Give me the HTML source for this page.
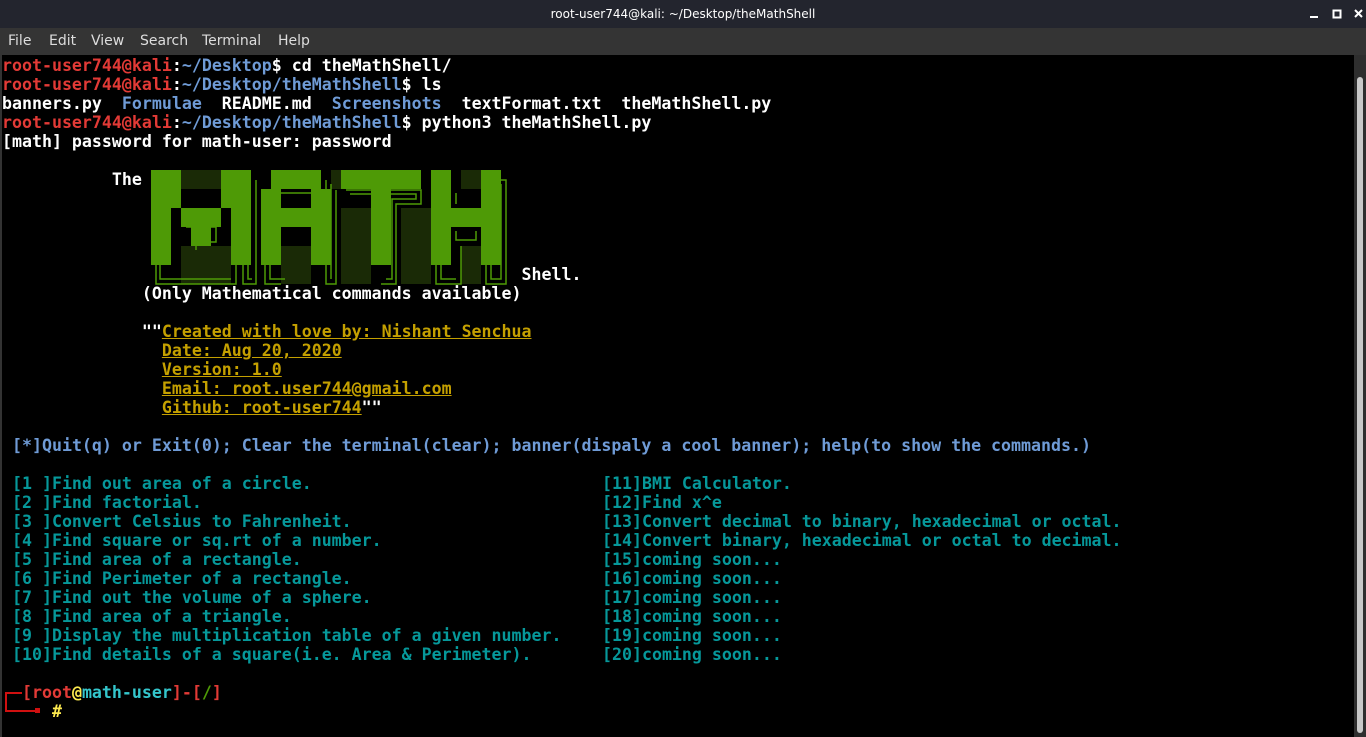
<!DOCTYPE html>
<html><head><meta charset="utf-8"><style>
html,body{margin:0;padding:0;background:#000;width:1366px;height:737px;overflow:hidden}
#title{position:absolute;left:0;top:0;width:1366px;height:28px;background:#23252e;color:#fff;font:12px "DejaVu Sans","Liberation Sans",sans-serif;text-align:center;line-height:28px}
#menu{position:absolute;left:0;top:28px;width:1366px;height:27px;background:#343434;color:#ddd;font:14px "DejaVu Sans","Liberation Sans",sans-serif;line-height:27px}
#menu span{position:absolute;top:0}
#term{position:absolute;left:0;top:55px;width:1354px;height:682px;background:#000}
#lb{position:absolute;left:0;top:55px;width:2px;height:682px;background:#333}
#sb{position:absolute;left:1354px;top:55px;width:12px;height:682px;background:#2e2e2e}
#th{position:absolute;left:1357px;top:77px;width:6px;height:656px;background:#c8c8c8;border-radius:3px}
pre{position:absolute;left:2px;top:56px;margin:0;font:bold 16.6px "DejaVu Sans Mono","Liberation Mono",monospace;line-height:19px;color:#fff;white-space:pre}
.r{color:#e23a36}.b{color:#6f9bd6}.y{color:#c4a000;text-decoration:underline}.c{color:#06989a}.g{color:#4e9a06}.cy{color:#34c6cc}.yl{color:#fce94f}
</style></head><body>
<div id="title">root-user744@kali: ~/Desktop/theMathShell</div>
<svg style="position:absolute;left:1300px;top:0" width="66" height="28">
<rect x="10" y="16" width="8" height="2" fill="#fff"/>
<rect x="33.5" y="10.5" width="7" height="7" fill="none" stroke="#fff" stroke-width="2"/>
<path d="M55 10 L62 17 M62 10 L55 17" stroke="#fff" stroke-width="2"/>
</svg>
<div id="menu"><span style="left:8px">File</span><span style="left:49px">Edit</span><span style="left:91px">View</span><span style="left:140px">Search</span><span style="left:202px">Terminal</span><span style="left:278px">Help</span></div>
<div id="term"></div><div id="lb"></div><div id="sb"></div><div id="th"></div>
<svg style="position:absolute;left:0;top:0" width="1354" height="737">
<g fill="#1a2a06">
<rect x="181" y="170" width="40" height="19"/><rect x="181" y="246" width="50" height="38"/>
<rect x="271" y="170" width="10" height="19"/><rect x="281" y="246" width="30" height="38"/>
<rect x="331" y="170" width="10" height="19"/><rect x="341" y="208" width="30" height="76"/>
<rect x="401" y="208" width="30" height="76"/><rect x="461" y="170" width="20" height="19"/><rect x="461" y="246" width="20" height="38"/>
</g>
<g fill="#4e9a06">
<rect x="151" y="170" width="30" height="19"/><rect x="221" y="170" width="30" height="19"/>
<rect x="151" y="189" width="20" height="76"/><rect x="231" y="189" width="20" height="76"/>
<rect x="171" y="189" width="10" height="19"/><rect x="221" y="189" width="10" height="19"/>
<rect x="181" y="208" width="40" height="19"/><rect x="191" y="227" width="20" height="19"/>
<rect x="271" y="170" width="50" height="19"/><rect x="261" y="189" width="20" height="76"/><rect x="311" y="189" width="20" height="76"/><rect x="281" y="208" width="30" height="19"/>
<rect x="341" y="170" width="80" height="19"/><rect x="371" y="189" width="20" height="76"/>
<rect x="431" y="170" width="20" height="95"/><rect x="481" y="170" width="20" height="95"/><rect x="451" y="208" width="30" height="19"/>
</g>
<g fill="none" stroke="#4e9a06" stroke-width="1.5">
<path d="M156 265V284H236V265M243 180V284H256V180M265 265V284H281M326 180V284H336V190M276 193H321V204M346 190H421V204H396V284H381M436 265V284H461V246M486 265V284H506V180H491"/>
<path d="M160 265V279H231M248 184V279H252M270 265V279H285M331 184V279M350 194H416V199H392V279H386M441 265V279H456M491 265V279H501V184"/>
<path d="M176 193V204M226 193V204M186 227H216V242H196V250M456 193V204M456 231V240H476V231"/>
</g>
</svg>
<pre><span class="r">root-user744@kali</span>:<span class="b">~/Desktop</span>$ cd theMathShell/
<span class="r">root-user744@kali</span>:<span class="b">~/Desktop/theMathShell</span>$ ls
banners.py  <span class="b">Formulae</span>  README.md  <span class="b">Screenshots</span>  textFormat.txt  theMathShell.py
<span class="r">root-user744@kali</span>:<span class="b">~/Desktop/theMathShell</span>$ python3 theMathShell.py
[math] password for math-user: password

           The




                                                    Shell.
              (Only Mathematical commands available)

              ""<span class="y">Created with love by: Nishant Senchua</span>
                <span class="y">Date: Aug 20, 2020</span>
                <span class="y">Version: 1.0</span>
                <span class="y">Email: root.user744@gmail.com</span>
                <span class="y">Github: root-user744</span>""

 <span class="b">[*]Quit(q) or Exit(0); Clear the terminal(clear); banner(dispaly a cool banner); help(to show the commands.)</span>

<span class="c"> [1 ]Find out area of a circle.
 [2 ]Find factorial.
 [3 ]Convert Celsius to Fahrenheit.
 [4 ]Find square or sq.rt of a number.
 [5 ]Find area of a rectangle.
 [6 ]Find Perimeter of a rectangle.
 [7 ]Find out the volume of a sphere.
 [8 ]Find area of a triangle.
 [9 ]Display the multiplication table of a given number.
 [10]Find details of a square(i.e. Area &amp; Perimeter).</span>

  <span class="r">[root</span><span class="yl">@</span><span class="cy">math-user</span><span class="r">]-[</span><span class="g">/</span><span class="r">]</span>
     <span class="yl">#</span></pre>
<pre class="c" style="left:602px;top:474px">[11]BMI Calculator.
[12]Find x^e
[13]Convert decimal to binary, hexadecimal or octal.
[14]Convert binary, hexadecimal or octal to decimal.
[15]coming soon...
[16]coming soon...
[17]coming soon...
[18]coming soon...
[19]coming soon...
[20]coming soon...</pre>
<svg style="position:absolute;left:0;top:680px" width="60" height="40">
<path d="M22 13H6V31H37" stroke="#d01010" stroke-width="2" fill="none"/>
<rect x="35" y="28" width="5" height="5" fill="#d01010"/>
</svg>
</body></html>
